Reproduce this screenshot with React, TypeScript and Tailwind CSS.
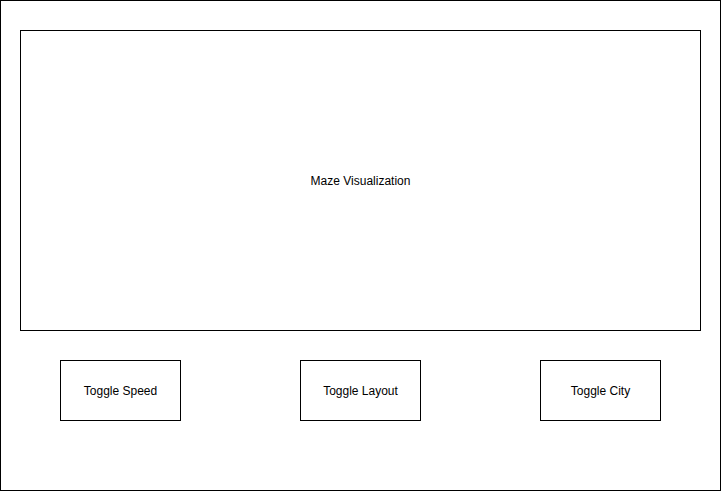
import React from 'react';

const buttons = ['Toggle Speed', 'Toggle Layout', 'Toggle City'];

const App: React.FC = () => {
  return (
    <div
      className="w-[721px] h-[491px] border border-black bg-white pl-[19px] pt-[29px] text-[12px] text-black"
      style={{ fontFamily: '"Liberation Sans", Arial, sans-serif' }}
    >
      <div className="w-[681px] h-[301px] border border-black flex items-center justify-center">
        Maze Visualization
      </div>
      <div className="flex gap-[119px] ml-[40px] mt-[29px]">
        {buttons.map(label => (
          <button
            key={label}
            className="w-[121px] h-[61px] border border-black bg-white flex items-center justify-center"
          >
            {label}
          </button>
        ))}
      </div>
    </div>
  );
};

export default App;
